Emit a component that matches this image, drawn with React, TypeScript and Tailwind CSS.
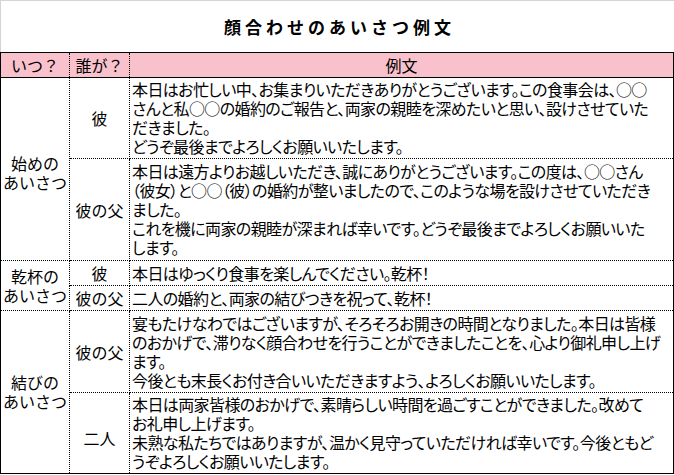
const cell = "border border-dotted border-black p-0";
const jp = "font-['Noto_Sans_CJK_JP','Noto_Sans_CJK_SC',sans-serif]";
const text = "px-[2px] text-left align-middle whitespace-nowrap leading-[19px] tracking-[-0.6px] [font-feature-settings:'palt']";

function Lines({ lines }: { lines: string[] }) {
  return (
    <>
      {lines.map((l, i) => (
        <div key={i}>{l}</div>
      ))}
    </>
  );
}

export default function App() {
  return (
    <div className={`w-[674px] h-[475px] overflow-hidden bg-white text-black text-[16px] ${jp}`}>
      <div className="h-[52px] border-t border-l border-[#d4d4d4] flex items-center justify-center">
        <h1 className="text-[17px] font-bold tracking-[4px] pl-[4px]">顔合わせのあいさつ例文</h1>
      </div>
      <table className="w-[673px] border-collapse border border-solid border-black table-fixed">
        <colgroup>
          <col className="w-[69px]" />
          <col className="w-[60px]" />
          <col className="w-[544px]" />
        </colgroup>
        <thead>
          <tr className="h-[25px] bg-[#f8c1cc]">
            <th className={`${cell} [border-bottom-style:solid] font-normal text-center`}>いつ？</th>
            <th className={`${cell} [border-bottom-style:solid] font-normal text-center`}>誰が？</th>
            <th className={`${cell} [border-bottom-style:solid] font-normal text-center`}>例文</th>
          </tr>
        </thead>
        <tbody>
          <tr className="h-[81px]">
            <td rowSpan={2} className={`${cell} text-center leading-[19px] pt-[8px]`}>
              <div>始めの</div>
              <div>あいさつ</div>
            </td>
            <td className={`${cell} text-center`}>彼</td>
            <td className={`${cell} ${text}`}>
              <Lines
                lines={[
                  "本日はお忙しい中、お集まりいただきありがとうございます。この食事会は、○○",
                  "さんと私○○の婚約のご報告と、両家の親睦を深めたいと思い、設けさせていた",
                  "だきました。",
                  "どうぞ最後までよろしくお願いいたします。",
                ]}
              />
            </td>
          </tr>
          <tr className="h-[102px]">
            <td className={`${cell} text-center`}>彼の父</td>
            <td className={`${cell} ${text}`}>
              <Lines
                lines={[
                  "本日は遠方よりお越しいただき、誠にありがとうございます。この度は、○○さん",
                  "（彼女）と○○（彼）の婚約が整いましたので、このような場を設けさせていただき",
                  "ました。",
                  "これを機に両家の親睦が深まれば幸いです。どうぞ最後までよろしくお願いいた",
                  "します。",
                ]}
              />
            </td>
          </tr>
          <tr className="h-[25px]">
            <td rowSpan={2} className={`${cell} text-center leading-[19px]`}>
              <div>乾杯の</div>
              <div>あいさつ</div>
            </td>
            <td className={`${cell} text-center`}>彼</td>
            <td className={`${cell} ${text}`}>本日はゆっくり食事を楽しんでください。乾杯！</td>
          </tr>
          <tr className="h-[25px]">
            <td className={`${cell} text-center`}>彼の父</td>
            <td className={`${cell} ${text}`}>二人の婚約と、両家の結びつきを祝って、乾杯！</td>
          </tr>
          <tr className="h-[82px]">
            <td rowSpan={2} className={`${cell} text-center leading-[19px]`}>
              <div>結びの</div>
              <div>あいさつ</div>
            </td>
            <td className={`${cell} text-center`}>彼の父</td>
            <td className={`${cell} ${text}`}>
              <Lines
                lines={[
                  "宴もたけなわではございますが、そろそろお開きの時間となりました。本日は皆様",
                  "のおかげで、滞りなく顔合わせを行うことができましたことを、心より御礼申し上げ",
                  "ます。",
                  "今後とも末長くお付き合いいただきますよう、よろしくお願いいたします。",
                ]}
              />
            </td>
          </tr>
          <tr className="h-[81px]">
            <td className={`${cell} text-center pt-[10px]`}>二人</td>
            <td className={`${cell} ${text}`}>
              <Lines
                lines={[
                  "本日は両家皆様のおかげで、素晴らしい時間を過ごすことができました。改めて",
                  "お礼申し上げます。",
                  "未熟な私たちではありますが、温かく見守っていただければ幸いです。今後ともど",
                  "うぞよろしくお願いいたします。",
                ]}
              />
            </td>
          </tr>
        </tbody>
      </table>
    </div>
  );
}
